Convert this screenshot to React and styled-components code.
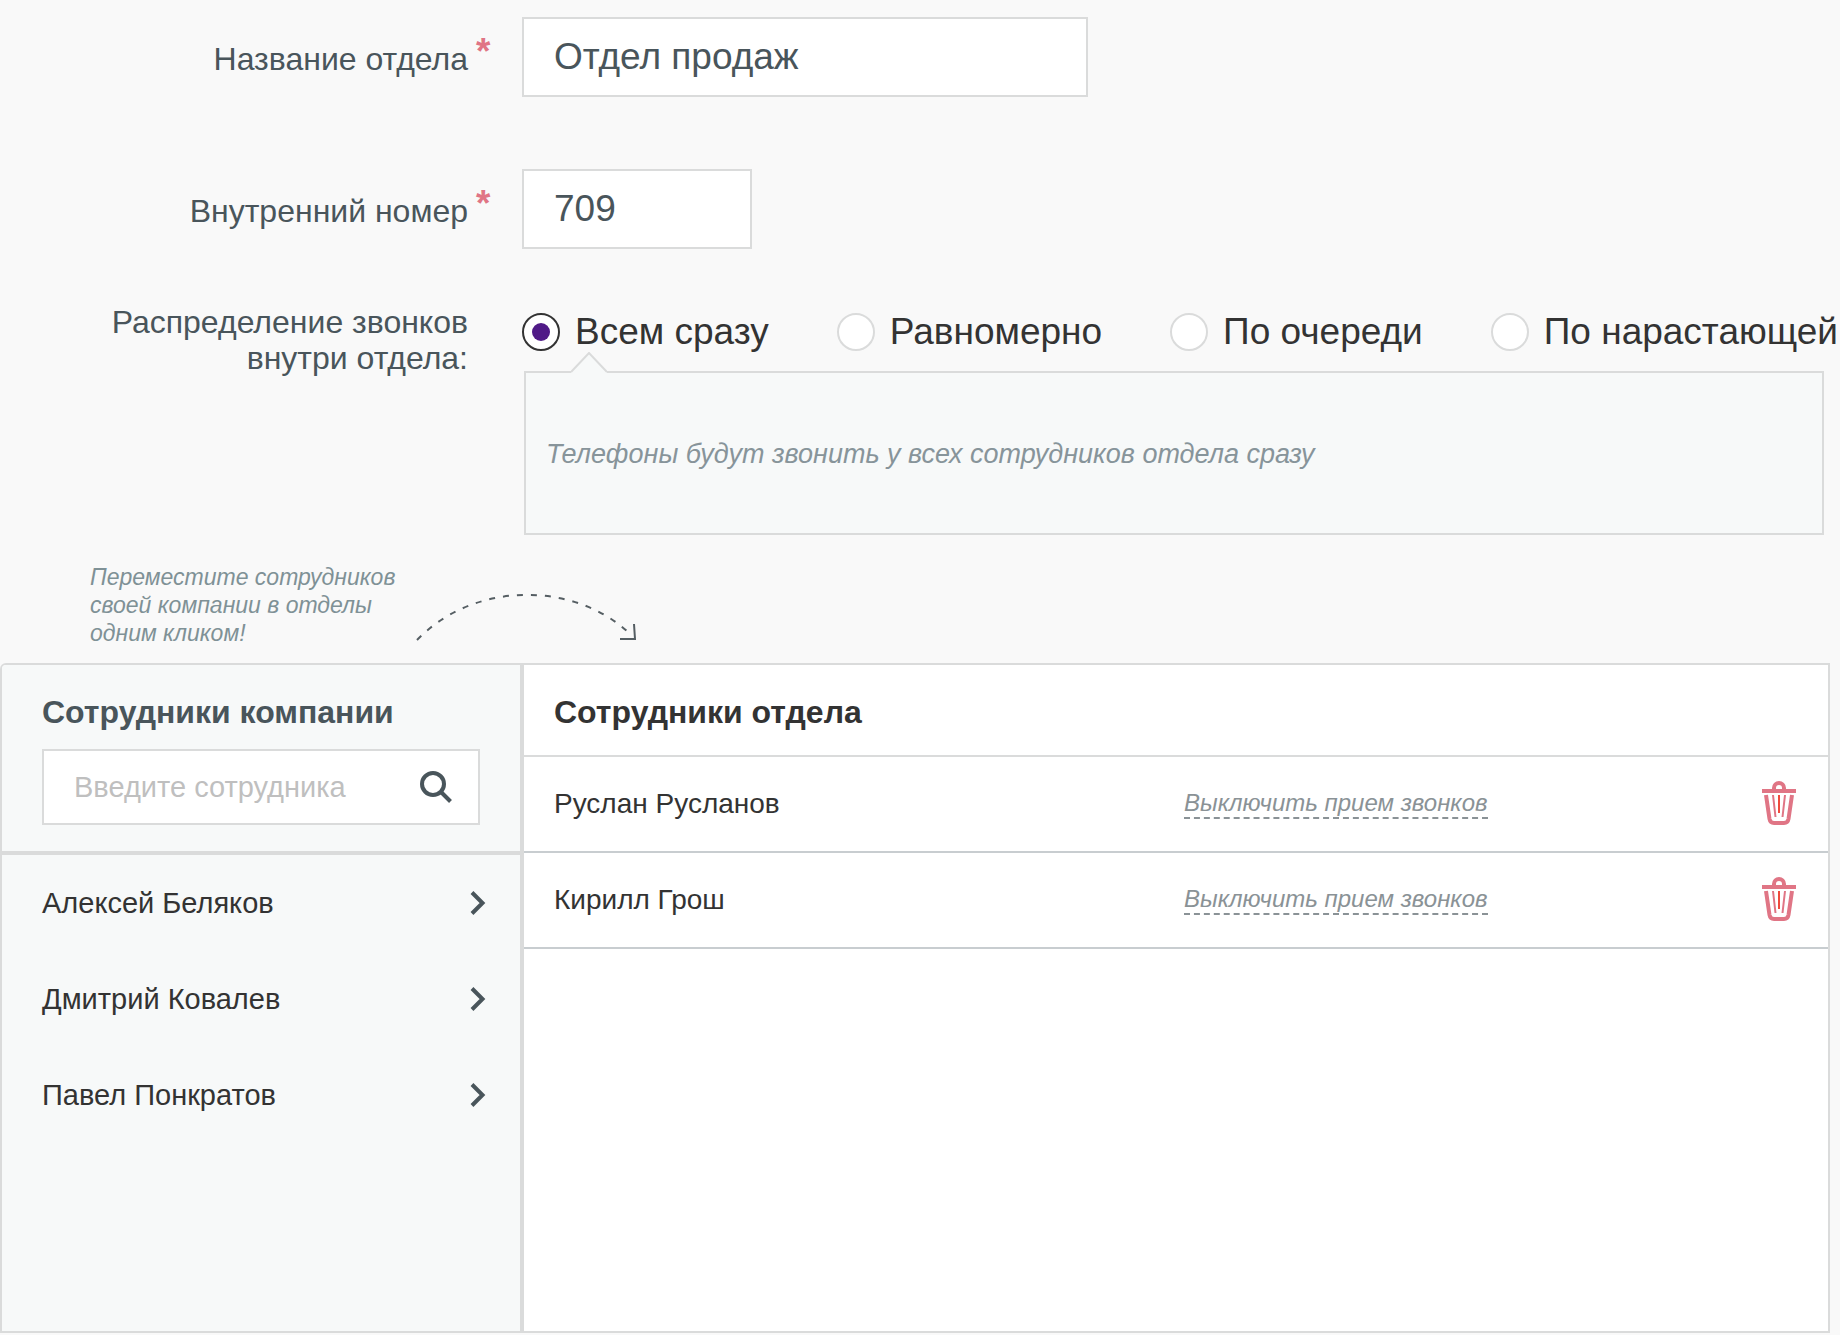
import React, { useState } from 'react'

import styled, { createGlobalStyle } from 'styled-components'


const modes = [
    { id: 'all', title: 'Всем сразу', hint: 'Телефоны будут звонить у всех сотрудников отдела сразу' },
    { id: 'even', title: 'Равномерно', hint: '' },
    { id: 'queue', title: 'По очереди', hint: '' },
    { id: 'growing', title: 'По нарастающей', hint: '' },
]

const App = () => {

    const [name, setName] = useState('Отдел продаж')
    const [number, setNumber] = useState('709')
    const [mode, setMode] = useState('all')
    const [search, setSearch] = useState('')
    const [company, setCompany] = useState(['Алексей Беляков', 'Дмитрий Ковалев', 'Павел Понкратов'])
    const [department, setDepartment] = useState(['Руслан Русланов', 'Кирилл Грош'])

    const addEmployee = (person) => {
        setCompany(company.filter(item => item !== person))
        setDepartment([...department, person])
    }

    const removeEmployee = (person) => {
        setDepartment(department.filter(item => item !== person))
        setCompany([...company, person])
    }

    const found = company.filter(item => item.toLowerCase().includes(search.toLowerCase()))

    return (
        <Page>
            <GlobalStyle />
            <Field>
                <Label htmlFor='name'>Название отдела</Label>
                <Required>*</Required>
                <TextInput id='name' $width='566px' value={name} onChange={e=>setName(e.target.value)} />
            </Field>
            <Field>
                <Label htmlFor='number'>Внутренний номер</Label>
                <Required>*</Required>
                <TextInput id='number' $width='230px' value={number} onChange={e=>setNumber(e.target.value)} />
            </Field>

            <ModeField role='radiogroup' aria-labelledby='mode'>
                <ModeTitle id='mode'>Распределение звонков<br />внутри отдела:</ModeTitle>
                <ModeContent>
                    <Modes>
                        {modes.map(item => (
                            <ModeLabel key={item.id}>
                                <Radio type='radio' name='mode' checked={mode === item.id} onChange={()=>setMode(item.id)} />
                                {item.title}
                            </ModeLabel>
                        ))}
                    </Modes>
                    <ModeHint>
                        <HintCorner viewBox='0 0 36 21'>
                            <path d='M0 19 L18 1 L36 19 V21 H0 Z' fill='#f7f9f9' />
                            <path d='M0 20 L18 1 L36 20' fill='none' stroke='#dadbdb' strokeWidth='2' />
                        </HintCorner>
                        {modes.find(item => item.id === mode).hint}
                    </ModeHint>
                </ModeContent>
            </ModeField>

            <Tip>
                <TipText>Переместите сотрудников<br />своей компании в отделы<br />одним кликом!</TipText>
                <svg width='224' height='54' viewBox='0 0 224 54' fill='none' stroke='#555e63' strokeWidth='2'>
                    <path d='M2 47 C60 -13 160 -11 214 40' strokeDasharray='6 8' />
                    <path d='M205 46 H220 L219 31' />
                </svg>
            </Tip>

            <Panel>
                <Company>
                    <CompanyHeader>
                        <Title $color='#49555b'>Сотрудники компании</Title>
                        <Search>
                            <SearchInput
                                aria-label='Введите сотрудника'
                                placeholder='Введите сотрудника'
                                value={search}
                                onChange={e=>setSearch(e.target.value)}
                            />
                            <svg width='32' height='32' viewBox='0 0 32 32' fill='none' stroke='#49555b' strokeWidth='4'>
                                <circle cx='13' cy='13' r='11' />
                                <path d='M20.5 20.5 L30.5 30.5' />
                            </svg>
                        </Search>
                    </CompanyHeader>
                    <List>
                        {found.map(person => (
                            <li key={person}>
                                <CompanyRow onClick={()=>addEmployee(person)}>
                                    {person}
                                    <svg width='16' height='24' viewBox='0 0 16 24' fill='none' stroke='#49555b' strokeWidth='4'>
                                        <path d='M2 1.5 L12.5 12 L2 22.5' />
                                    </svg>
                                </CompanyRow>
                            </li>
                        ))}
                    </List>
                </Company>
                <Department>
                    <DepartmentHeader>
                        <Title $color='#333'>Сотрудники отдела</Title>
                    </DepartmentHeader>
                    <List>
                        {department.map(person => (
                            <DepartmentRow key={person}>
                                <span>{person}</span>
                                <ToggleCalls>Выключить прием звонков</ToggleCalls>
                                <Remove aria-label='Удалить' onClick={()=>removeEmployee(person)}>
                                    <TrashIcon />
                                </Remove>
                            </DepartmentRow>
                        ))}
                    </List>
                </Department>
            </Panel>
        </Page>
    )
}

const TrashIcon = () => (
    <svg width='34' height='46' viewBox='0 0 34 46' fill='none' stroke='#e07585'>
        <path d='M12 9 V7 A5 5 0 0 1 22 7 V9' strokeWidth='4' />
        <path d='M0 10 H34' strokeWidth='4' />
        <path d='M4 14 L7.5 38 Q8.2 42 12 42 H22 Q25.8 42 26.5 38 L30 14' strokeWidth='4' />
        <path d='M11 14 L13.5 36 M23 14 L20.5 36' strokeWidth='2' />
        <path d='M17 14 V32' stroke='#f04a3c' strokeWidth='2' />
    </svg>
)

export default App

const GlobalStyle = createGlobalStyle`
    * {
        box-sizing: border-box;
    }

    body {
        margin: 0;
        background-color: #f9f9f9;
        color: #333;
        font-family: "Liberation Sans", Arial, sans-serif;
        overflow-x: hidden;
    }

    button, input {
        font-family: inherit;
    }

    button {
        padding: 0;
        border: none;
        background: none;
        cursor: pointer;
    }

    svg {
        display: block;
        flex-shrink: 0;
    }
`

const Page = styled.div`
    padding: 17px 10px 2px 0;
`

const Field = styled.div`
    display: grid;
    grid-template-columns: 468px 54px 1fr;
    align-items: center;
    margin-bottom: 72px;
`

const Label = styled.label`
    padding-top: 4px;
    color: #49555b;
    font-size: 32px;
    line-height: 36px;
    text-align: right;
`

const Required = styled.span`
    padding: 0 0 10px 8px;
    color: #e07585;
    font-size: 37px;
    font-weight: bold;
    line-height: 36px;
`

const TextInput = styled.input`
    width: ${props => props.$width};
    height: 80px;
    padding: 0 30px;
    border: 2px solid #dadbdb;
    border-radius: 0;
    outline: none;
    background-color: #fff;
    color: #49555b;
    font-size: 37px;
`

const ModeField = styled.div`
    display: grid;
    grid-template-columns: 468px minmax(0, 1fr);
    column-gap: 54px;
    margin-top: -17px;
`

const ModeTitle = styled.div`
    color: #49555b;
    font-size: 32px;
    line-height: 36px;
    text-align: right;
`

const ModeContent = styled.div`
    padding-top: 9px;
`

const Modes = styled.div`
    display: flex;
    gap: 68px;
    white-space: nowrap;
`

const ModeLabel = styled.label`
    display: flex;
    align-items: center;
    gap: 15px;
    font-size: 37px;
    line-height: 38px;
    cursor: pointer;
`

const Radio = styled.input`
    appearance: none;
    display: flex;
    align-items: center;
    justify-content: center;
    flex-shrink: 0;
    width: 38px;
    height: 38px;
    margin: 0;
    border: 2px solid #dadbdb;
    border-radius: 50%;
    background-color: #fff;

    &:checked {
        border-color: #333;
    }

    &:checked::before {
        content: '';
        width: 18px;
        height: 18px;
        border-radius: 50%;
        background-color: #501a87;
    }
`

const ModeHint = styled.div`
    position: relative;
    display: flex;
    align-items: center;
    min-height: 164px;
    margin: 20px 6px 0 2px;
    padding: 2px 20px 0;
    border: 2px solid #dadbdb;
    background-color: #f7f9f9;
    color: #87949a;
    font-size: 27px;
    font-style: italic;
`

const HintCorner = styled.svg`
    position: absolute;
    top: -21px;
    left: 45px;
    width: 36px;
    height: 21px;
`

const Tip = styled.div`
    display: flex;
    align-items: flex-end;
    margin: 28px 0 16px 90px;
`

const TipText = styled.div`
    width: 325px;
    color: #7f9196;
    font-size: 23px;
    font-style: italic;
    line-height: 28px;
`

const Panel = styled.div`
    display: grid;
    grid-template-columns: 522px 1fr;
    min-height: 670px;
    border: 2px solid #dadbdb;
    border-top-left-radius: 6px;
    background-color: #fff;
`

const Company = styled.div`
    border-right: 4px solid #dadbdb;
    border-top-left-radius: 4px;
    background-color: #f7f9f9;
`

const CompanyHeader = styled.div`
    padding: 29px 40px 26px;
    border-bottom: 4px solid #dadbdb;
`

const Title = styled.h2`
    margin: 0;
    color: ${props => props.$color};
    font-size: 32px;
    line-height: 36px;
`

const Search = styled.label`
    display: flex;
    align-items: center;
    height: 76px;
    margin-top: 19px;
    padding: 0 26px 0 30px;
    border: 2px solid #dadbdb;
    background-color: #fff;
`

const SearchInput = styled.input`
    flex: 1;
    min-width: 0;
    padding: 0;
    border: none;
    outline: none;
    background: none;
    color: #49555b;
    font-size: 29px;

    &::placeholder {
        color: #bfbfbf;
    }
`

const List = styled.ul`
    margin: 0;
    padding: 0;
    list-style: none;
`

const CompanyRow = styled.button`
    display: flex;
    align-items: center;
    justify-content: space-between;
    width: 100%;
    height: 96px;
    padding: 0 34px 0 40px;
    color: #333;
    font-size: 29px;
`

const Department = styled.div`
    min-width: 0;
`

const DepartmentHeader = styled.div`
    padding: 29px 30px 25px;
    border-bottom: 2px solid #dadbdb;
`

const DepartmentRow = styled.li`
    display: grid;
    grid-template-columns: 630px 1fr 34px;
    align-items: center;
    height: 96px;
    padding: 0 32px 0 30px;
    border-bottom: 2px solid #c8cdd0;
    font-size: 28px;
`

const ToggleCalls = styled.button`
    justify-self: start;
    padding-bottom: 1px;
    border-bottom: 2px dashed #8a9296;
    color: #8a9296;
    font-size: 24px;
    font-style: italic;
    line-height: 26px;
`

const Remove = styled.button`
    width: 34px;
    height: 46px;
`
